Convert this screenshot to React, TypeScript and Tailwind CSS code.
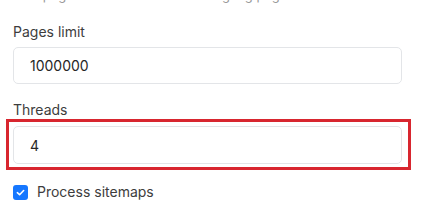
import { useState } from "react";

export default function App() {
  const [pages, setPages] = useState("1000000");
  const [threads, setThreads] = useState("4");
  const [sitemaps, setSitemaps] = useState(true);

  return (
    <div className="w-[421px] h-[214px] overflow-hidden bg-white font-['Inter',sans-serif]">
      {/* cut-off hint line from the section above */}
      <p className="-mt-[14px] pl-[13px] text-[13px] leading-[18px] text-[#9a9a9a] whitespace-nowrap">
        Max pages to crawl when scanning big pages
      </p>

      <div className="px-[13px] pt-[18px]">
        <label className="block text-[14px] leading-[20px] text-[#3d3d3d]">Pages limit</label>
        <input
          value={pages}
          onChange={(e) => setPages(e.target.value)}
          className="mt-[5px] w-[389px] h-[37px] px-[16px] rounded-[5px] border border-[#e3e5e8] text-[14px] text-[#262626] outline-none"
        />

        <label className="block mt-[16px] text-[14px] leading-[20px] text-[#3d3d3d]">Threads</label>
      </div>

      {/* highlighted field */}
      <div className="-mt-[1px] ml-[6px] w-[405px] h-[51px] border-[3px] border-[#d8262f] pl-[4px] pt-[4px]">
        <input
          value={threads}
          onChange={(e) => setThreads(e.target.value)}
          className="w-[389px] h-[38px] px-[16px] rounded-[5px] border border-[#e3e5e8] text-[14px] text-[#262626] outline-none"
        />
      </div>

      <label className="flex items-center gap-[9px] mt-[12px] pl-[13px] cursor-pointer">
        <span
          onClick={() => setSitemaps(!sitemaps)}
          className={`w-[15px] h-[15px] rounded-[3px] flex items-center justify-center ${sitemaps ? "bg-[#1677ff]" : "border border-[#d0d0d0]"}`}
        >
          {sitemaps && (
            <svg width="9" height="9" viewBox="0 0 10 10" fill="none">
              <path d="M1.5 5.2 L4 7.5 L8.5 2.8" stroke="white" strokeWidth="1.8" strokeLinecap="round" strokeLinejoin="round" />
            </svg>
          )}
        </span>
        <span className="text-[14px] leading-[20px] text-[#3d3d3d]">Process sitemaps</span>
      </label>
    </div>
  );
}
